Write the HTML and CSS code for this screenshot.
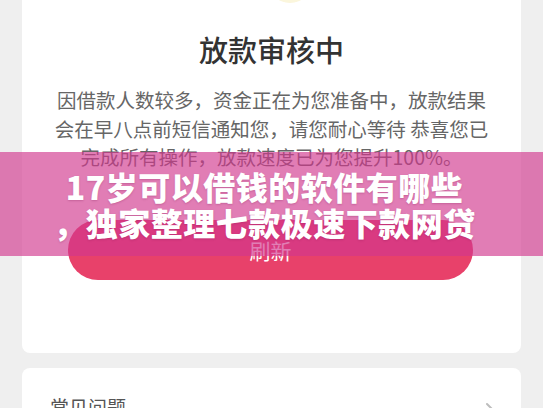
FILE: index.html
```html
<!DOCTYPE html>
<html lang="zh-CN">
<head>
<meta charset="utf-8">
<title>放款审核中</title>
<link rel="stylesheet" href="styles.css">
</head>
<body>
<main class="page">
  <section class="card status">
    <div class="status-icon"></div>
    <h1 class="status-title">放款审核中</h1>
    <p class="status-text">因借款人数较多，资金正在为您准备中，放款结果<br>会在早八点前短信通知您，请您耐心等待 恭喜您已<br>完成所有操作，放款速度已为您提升100%。</p>
    <button class="refresh-btn" type="button">刷新</button>
  </section>
  <section class="card faq">
    <div class="faq-row">
      <span class="faq-title">常见问题</span>
      <svg class="chevron" width="12" height="18" viewBox="0 0 12 18"><polyline points="2,2 9,9 2,16" fill="none" stroke="#bdbdbd" stroke-width="2" stroke-linecap="round" stroke-linejoin="round"/></svg>
    </div>
  </section>
</main>
<div class="banner">
  <p class="banner-text">17岁可以借钱的软件有哪些<br>，独家整理七款极速下款网贷</p>
</div>
</body>
</html>
```
FILE: styles.css
```css
html, body {
  margin: 0;
  padding: 0;
}
body {
  background: #efefef;
  font-family: "Noto Sans CJK SC", "Noto Sans", sans-serif;
  width: 543px;
  height: 408px;
  overflow: hidden;
  position: relative;
}
.page {
  display: flex;
  flex-direction: column;
  gap: 15px;
  padding: 0 22px;
  margin-top: -40px;
}
.card {
  background: #fff;
  border-radius: 8px;
}
.status {
  display: flex;
  flex-direction: column;
  align-items: center;
  padding: 3px 0 73px;
}
.status-icon {
  width: 44px;
  height: 40px;
  border-radius: 0 0 22px 22px;
  background: #fbf6dc;
  margin-left: 36px;
}
.status-title {
  margin: 26px 0 0;
  font-size: 29px;
  line-height: 40px;
  font-weight: 500;
  color: #333;
}
.status-text {
  margin: 17px 0 0;
  font-size: 19.5px;
  line-height: 28.5px;
  color: #666;
  text-align: center;
}
.refresh-btn {
  margin-top: 48px;
  width: 405px;
  height: 60px;
  border: 0;
  border-radius: 30px;
  background: #e8416a;
  color: #fff;
  font-family: inherit;
  font-size: 21px;
  margin-left: -2px;
}
.faq {
  padding: 26px 24px 30px 28px;
}
.faq-row {
  display: flex;
  align-items: center;
  justify-content: space-between;
}
.faq-title {
  font-size: 19px;
  line-height: 26px;
  color: #555;
}
.chevron {
  margin-top: 8px;
}
.banner {
  position: absolute;
  left: 0;
  top: 152px;
  width: 543px;
  height: 104px;
  background: rgba(209, 55, 141, 0.65);
  display: flex;
  align-items: center;
  justify-content: center;
}
.banner-text {
  margin: 0;
  padding-right: 14px;
  font-size: 32px;
  line-height: 36px;
  font-weight: 900;
  color: #fff;
  text-align: center;
  letter-spacing: 0.5px;
  text-shadow: 0 1px 2px rgba(120, 20, 80, 0.25);
}
```
